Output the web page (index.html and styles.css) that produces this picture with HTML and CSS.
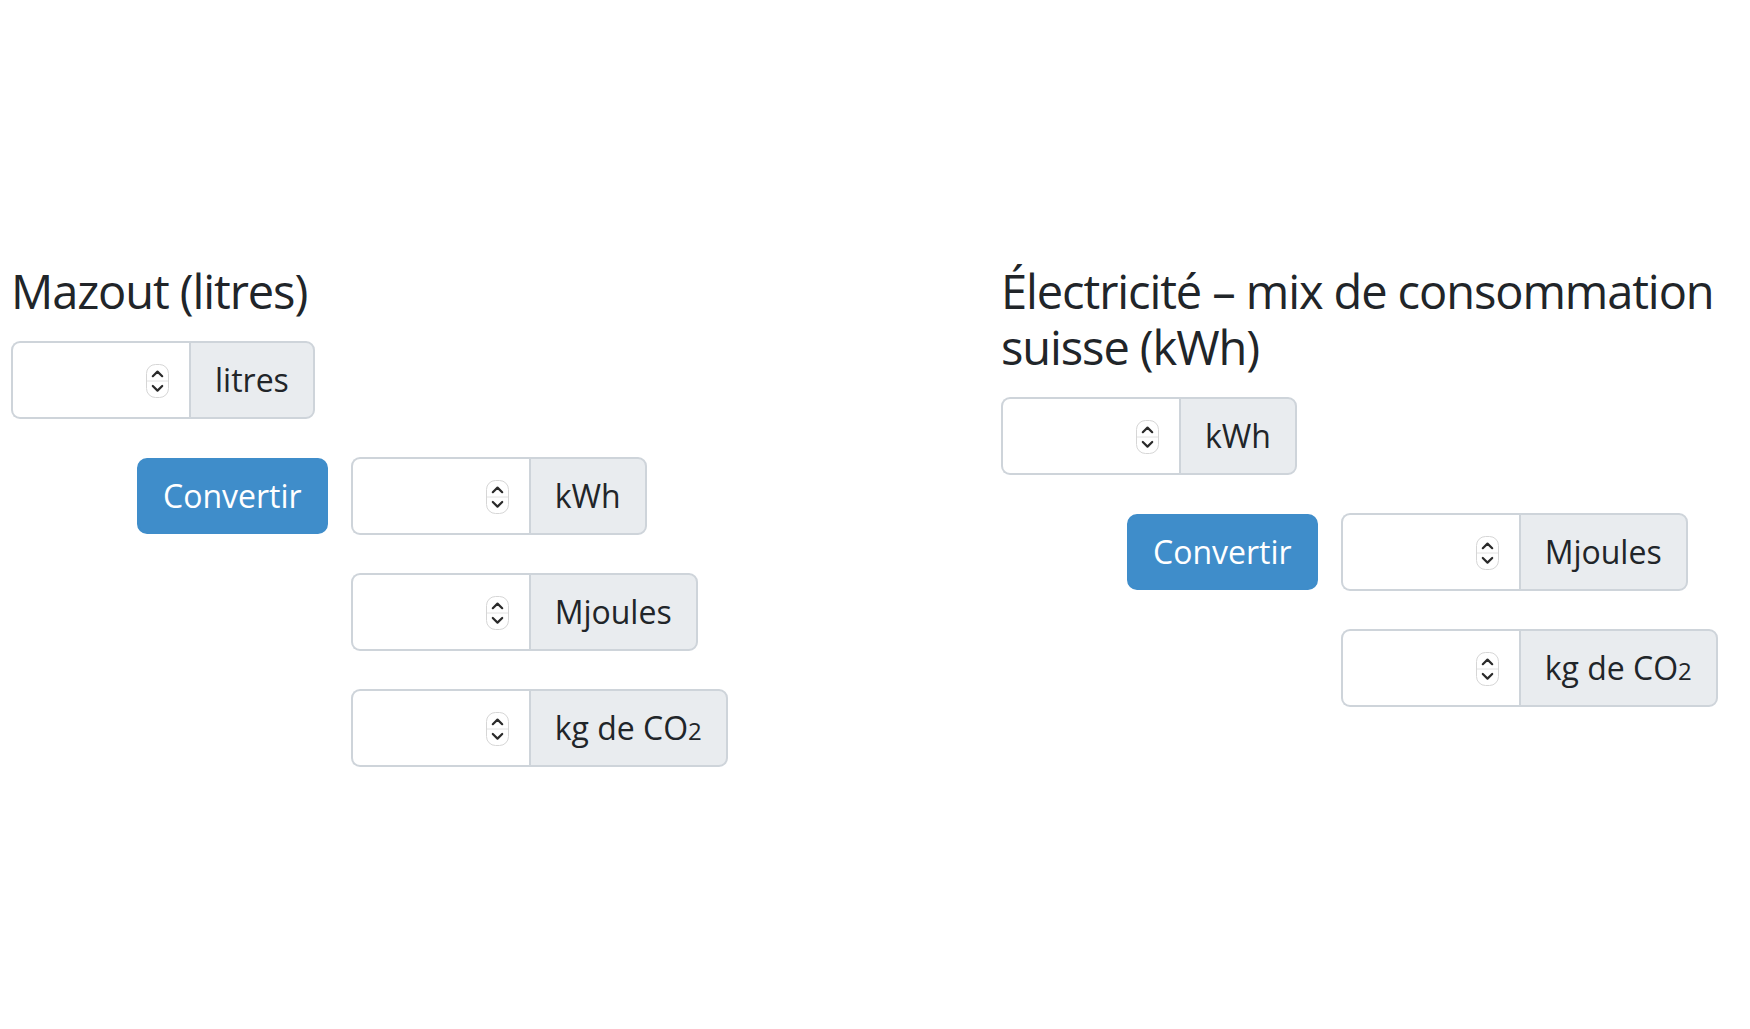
FILE: index.html
```html
<!DOCTYPE html>
<html lang="fr">
<head>
<meta charset="utf-8">
<title>Convertisseur</title>
<link rel="stylesheet" href="styles.css">
</head>
<body>
<main class="page">
  <section class="col">
    <h2 class="title">Mazout (litres)</h2>
    <div class="form">
      <div class="group">
        <label class="field"><input type="text" aria-label="litres"><svg class="spin" viewBox="0 0 23 34"><rect x="0.5" y="0.5" width="22" height="33" rx="9" fill="#fff" stroke="#d6d6d6"/><line x1="1" y1="17" x2="22" y2="17" stroke="#e2e2e2"/><path d="M6.8 12.2 L11.5 7.6 L16.2 12.2" fill="none" stroke="#2a2a2a" stroke-width="2.2" stroke-linecap="round" stroke-linejoin="round"/><path d="M6.8 22 L11.5 26.6 L16.2 22" fill="none" stroke="#2a2a2a" stroke-width="2.2" stroke-linecap="round" stroke-linejoin="round"/></svg></label>
        <span class="addon">litres</span>
      </div>
      <div class="convert-row">
        <button class="btn" type="button">Convertir</button>
        <div class="outputs">
          <div class="group">
            <label class="field"><input type="text" aria-label="kWh"><svg class="spin" viewBox="0 0 23 34"><rect x="0.5" y="0.5" width="22" height="33" rx="9" fill="#fff" stroke="#d6d6d6"/><line x1="1" y1="17" x2="22" y2="17" stroke="#e2e2e2"/><path d="M6.8 12.2 L11.5 7.6 L16.2 12.2" fill="none" stroke="#2a2a2a" stroke-width="2.2" stroke-linecap="round" stroke-linejoin="round"/><path d="M6.8 22 L11.5 26.6 L16.2 22" fill="none" stroke="#2a2a2a" stroke-width="2.2" stroke-linecap="round" stroke-linejoin="round"/></svg></label>
            <span class="addon">kWh</span>
          </div>
          <div class="group">
            <label class="field"><input type="text" aria-label="Mjoules"><svg class="spin" viewBox="0 0 23 34"><rect x="0.5" y="0.5" width="22" height="33" rx="9" fill="#fff" stroke="#d6d6d6"/><line x1="1" y1="17" x2="22" y2="17" stroke="#e2e2e2"/><path d="M6.8 12.2 L11.5 7.6 L16.2 12.2" fill="none" stroke="#2a2a2a" stroke-width="2.2" stroke-linecap="round" stroke-linejoin="round"/><path d="M6.8 22 L11.5 26.6 L16.2 22" fill="none" stroke="#2a2a2a" stroke-width="2.2" stroke-linecap="round" stroke-linejoin="round"/></svg></label>
            <span class="addon">Mjoules</span>
          </div>
          <div class="group">
            <label class="field"><input type="text" aria-label="kg de CO2"><svg class="spin" viewBox="0 0 23 34"><rect x="0.5" y="0.5" width="22" height="33" rx="9" fill="#fff" stroke="#d6d6d6"/><line x1="1" y1="17" x2="22" y2="17" stroke="#e2e2e2"/><path d="M6.8 12.2 L11.5 7.6 L16.2 12.2" fill="none" stroke="#2a2a2a" stroke-width="2.2" stroke-linecap="round" stroke-linejoin="round"/><path d="M6.8 22 L11.5 26.6 L16.2 22" fill="none" stroke="#2a2a2a" stroke-width="2.2" stroke-linecap="round" stroke-linejoin="round"/></svg></label>
            <span class="addon">kg de CO<span class="sub">2</span></span>
          </div>
        </div>
      </div>
    </div>
  </section>

  <section class="col">
    <h2 class="title">Électricité – mix de consommation suisse (kWh)</h2>
    <div class="form">
      <div class="group">
        <label class="field"><input type="text" aria-label="kWh"><svg class="spin" viewBox="0 0 23 34"><rect x="0.5" y="0.5" width="22" height="33" rx="9" fill="#fff" stroke="#d6d6d6"/><line x1="1" y1="17" x2="22" y2="17" stroke="#e2e2e2"/><path d="M6.8 12.2 L11.5 7.6 L16.2 12.2" fill="none" stroke="#2a2a2a" stroke-width="2.2" stroke-linecap="round" stroke-linejoin="round"/><path d="M6.8 22 L11.5 26.6 L16.2 22" fill="none" stroke="#2a2a2a" stroke-width="2.2" stroke-linecap="round" stroke-linejoin="round"/></svg></label>
        <span class="addon">kWh</span>
      </div>
      <div class="convert-row">
        <button class="btn" type="button">Convertir</button>
        <div class="outputs">
          <div class="group">
            <label class="field"><input type="text" aria-label="Mjoules"><svg class="spin" viewBox="0 0 23 34"><rect x="0.5" y="0.5" width="22" height="33" rx="9" fill="#fff" stroke="#d6d6d6"/><line x1="1" y1="17" x2="22" y2="17" stroke="#e2e2e2"/><path d="M6.8 12.2 L11.5 7.6 L16.2 12.2" fill="none" stroke="#2a2a2a" stroke-width="2.2" stroke-linecap="round" stroke-linejoin="round"/><path d="M6.8 22 L11.5 26.6 L16.2 22" fill="none" stroke="#2a2a2a" stroke-width="2.2" stroke-linecap="round" stroke-linejoin="round"/></svg></label>
            <span class="addon">Mjoules</span>
          </div>
          <div class="group">
            <label class="field"><input type="text" aria-label="kg de CO2"><svg class="spin" viewBox="0 0 23 34"><rect x="0.5" y="0.5" width="22" height="33" rx="9" fill="#fff" stroke="#d6d6d6"/><line x1="1" y1="17" x2="22" y2="17" stroke="#e2e2e2"/><path d="M6.8 12.2 L11.5 7.6 L16.2 12.2" fill="none" stroke="#2a2a2a" stroke-width="2.2" stroke-linecap="round" stroke-linejoin="round"/><path d="M6.8 22 L11.5 26.6 L16.2 22" fill="none" stroke="#2a2a2a" stroke-width="2.2" stroke-linecap="round" stroke-linejoin="round"/></svg></label>
            <span class="addon">kg de CO<span class="sub">2</span></span>
          </div>
        </div>
      </div>
    </div>
  </section>
</main>
</body>
</html>
```

FILE: styles.css
```css
* { box-sizing: border-box; }

body {
  margin: 0;
  background: #fff;
  font-family: "Open Sans", "Noto Sans", sans-serif;
  color: #212529;
}

.page {
  display: grid;
  grid-template-columns: 990px 735px;
  padding: 263px 0 0 11px;
}

.title {
  font-size: 47px;
  line-height: 56px;
  font-weight: 500;
  letter-spacing: -1.1px;
  margin: 0 0 22px;
  color: #212529;
}

.form {
  display: flex;
  flex-direction: column;
  align-items: flex-start;
  gap: 38px;
}

.group {
  display: flex;
  height: 78px;
}

.field {
  width: 178px;
  display: flex;
  align-items: center;
  border: 2px solid #ced4da;
  border-right: 0;
  border-radius: 9px 0 0 9px;
  padding: 0 20px 0 24px;
  background: #fff;
}

.field input {
  flex: 1;
  min-width: 0;
  border: 0;
  outline: 0;
  padding: 0;
  background: transparent;
  font: inherit;
  font-size: 32px;
}

.spin {
  width: 23px;
  height: 34px;
  flex: none;
  margin-top: 2px;
}

.addon {
  display: flex;
  align-items: center;
  padding: 0 24px;
  border: 2px solid #ced4da;
  border-radius: 0 9px 9px 0;
  background: #e9ecef;
  font-size: 32px;
  line-height: 48px;
  white-space: nowrap;
}

.sub {
  font-size: 75%;
  position: relative;
  top: 3px;
}

.convert-row {
  display: flex;
  align-items: flex-start;
  padding-left: 126px;
  gap: 23px;
}

.btn {
  height: 76px;
  margin-top: 1px;
  padding: 0 24px;
  background: #3f8dca;
  color: #fff;
  border: 2px solid #3f8dca;
  border-radius: 10px;
  font-family: inherit;
  font-size: 32px;
  line-height: 48px;
}

.outputs {
  display: flex;
  flex-direction: column;
  gap: 38px;
}
```
